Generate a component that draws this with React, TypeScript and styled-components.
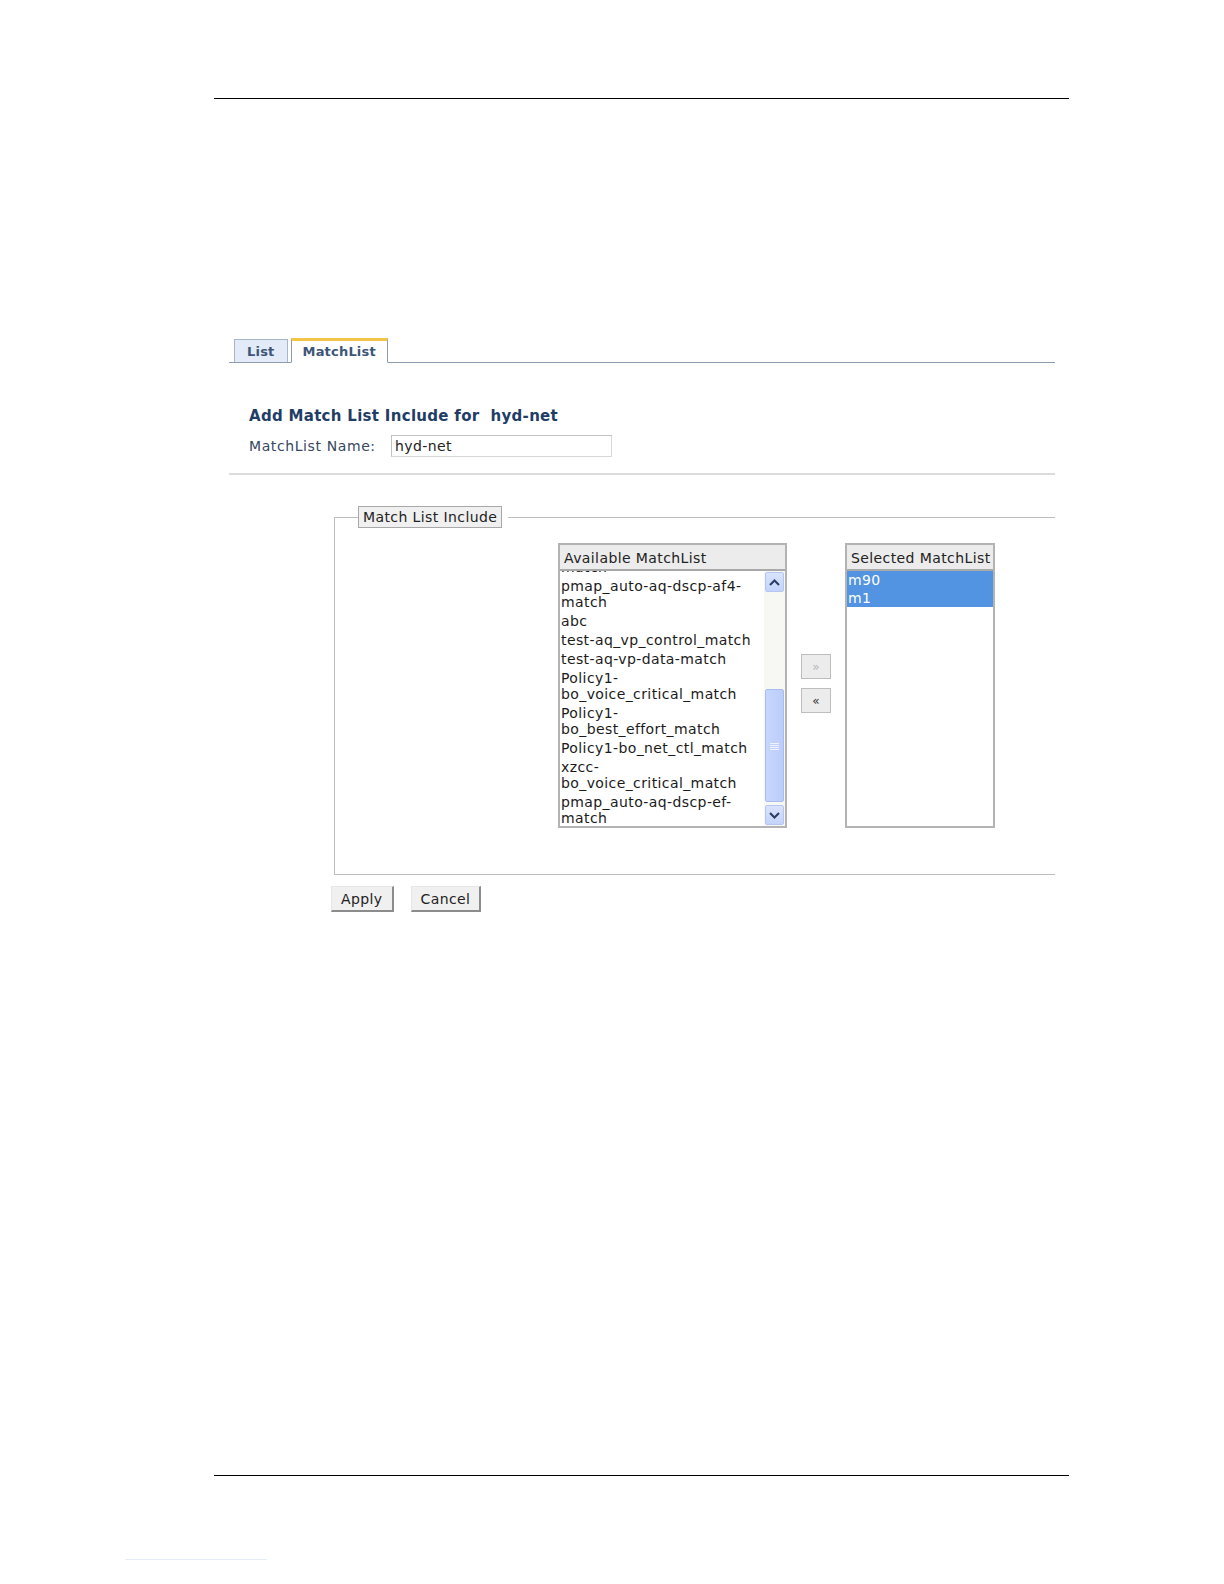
import React from "react";
import styled, { createGlobalStyle } from "styled-components";

const GlobalStyle = createGlobalStyle`
  html, body {
    margin: 0;
    padding: 0;
    background: #ffffff;
    overflow: hidden;
  }
  body {
    font-family: "DejaVu Sans", Verdana, sans-serif;
    font-size: 14px;
    letter-spacing: 0.4px;
    color: #222;
  }
`;

const Page = styled.div`
  width: 1224px;
  height: 1584px;
  padding-top: 98px;
  box-sizing: border-box;
  display: flex;
  flex-direction: column;
  overflow: hidden;
`;

const Rule = styled.div<{ $top: number }>`
  flex: none;
  margin-top: ${(p) => p.$top}px;
  margin-left: 214px;
  width: 855px;
  border-top: 1px solid #000;
`;

const FootLink = styled.div`
  flex: none;
  margin-top: 83px;
  margin-left: 125px;
  width: 142px;
  border-top: 1px solid #e6ecf8;
`;

const Content = styled.div`
  flex: none;
  margin-top: 239px;
  margin-left: 229px;
  width: 826px;
`;

const TabBar = styled.div`
  display: flex;
  align-items: flex-end;
  gap: 3px;
  height: 24px;
  padding-left: 5px;
  border-bottom: 1px solid #8e9cb2;
`;

const Tab = styled.div<{ $active?: boolean }>`
  box-sizing: border-box;
  height: ${(p) => (p.$active ? 25 : 23)}px;
  margin-bottom: ${(p) => (p.$active ? -1 : 0)}px;
  padding: ${(p) => (p.$active ? "3px 11px 0 11px" : "4px 12px 0 12px")};
  font-size: 13px;
  letter-spacing: 0.2px;
  font-weight: bold;
  color: #3d5677;
  background: ${(p) => (p.$active ? "#ffffff" : "#e3ebf8")};
  border: 1px solid ${(p) => (p.$active ? "#8e9cb2" : "#a9b6ca")};
  border-top: ${(p) => (p.$active ? "3px solid #f3c54a" : "1px solid #a9b6ca")};
  border-bottom: ${(p) => (p.$active ? "1px solid #ffffff" : "none")};
  line-height: 16px;
`;

const Heading = styled.h2`
  margin: 44px 0 0 20px;
  font-size: 15px;
  letter-spacing: 0.3px;
  line-height: 18px;
  font-weight: bold;
  color: #1f3d66;
  white-space: pre;
`;

const FieldRow = styled.div`
  display: flex;
  align-items: center;
  margin: 10px 0 0 20px;
  height: 22px;
`;

const Label = styled.label`
  width: 142px;
  color: #34485f;
  letter-spacing: 0.6px;
`;

const TextInput = styled.input`
  box-sizing: border-box;
  width: 221px;
  height: 22px;
  padding: 0 3px;
  border: 1px solid #d8d8d8;
  border-top-color: #c2c2c2;
  border-left-color: #c2c2c2;
  font-family: "DejaVu Sans", Verdana, sans-serif;
  font-size: 14px;
  letter-spacing: 0.4px;
  color: #222;
  outline: none;
`;

const Separator = styled.div`
  margin-top: 16px;
  border-top: 2px solid #dcdcdc;
`;

const Fieldset = styled.fieldset`
  margin: 31px 0 0 105px;
  padding: 15px 0 46px 0;
  border: 1px solid #bdbdbd;
  border-right: none;
  min-width: 0;
`;

const Legend = styled.legend`
  margin-left: 23px;
  padding: 0 6px 0 0;
`;

const LegendBox = styled.span`
  display: block;
  padding: 2px 4px 2px 4px;
  border: 1px solid #a8a8a8;
  background: #f0f0f0;
  line-height: 16px;
`;

const Shuttle = styled.div`
  display: flex;
  align-items: flex-start;
  margin-left: 223px;
`;

const ListBox = styled.div<{ $width: number }>`
  box-sizing: border-box;
  width: ${(p) => p.$width}px;
  height: 285px;
  border: 2px solid #b3b3b3;
  background: #ffffff;
  display: flex;
  flex-direction: column;
  overflow: hidden;
`;

const ListHeader = styled.div`
  flex: none;
  height: 26px;
  box-sizing: border-box;
  padding: 5px 4px 0 4px;
  background: #ececec;
  border-bottom: 2px solid #a9a9a9;
  line-height: 16px;
  white-space: nowrap;
`;

const ListBody = styled.div`
  flex: 1;
  display: flex;
  overflow: hidden;
`;

const Viewport = styled.div`
  flex: 1;
  overflow: hidden;
`;

const Scroller = styled.div<{ $offset: number }>`
  margin-top: ${(p) => -p.$offset}px;
`;

const Item = styled.div<{ $selected?: boolean }>`
  padding: ${(p) => (p.$selected ? "1px 1px 1px 1px" : "1px 1px 2px 1px")};
  line-height: 16px;
  color: ${(p) => (p.$selected ? "#ffffff" : "#1b1b1b")};
  background: ${(p) => (p.$selected ? "#5294e2" : "transparent")};
`;

const ScrollTrack = styled.div`
  flex: none;
  width: 21px;
  background: #f7f7f3;
  display: flex;
  flex-direction: column;
  padding: 1px;
  box-sizing: border-box;
`;

const ScrollButton = styled.div`
  height: 20px;
  box-sizing: border-box;
  border: 1px solid #b6c6f0;
  border-radius: 2px;
  background: linear-gradient(#d9e3fd, #c3d3fb);
  display: flex;
  align-items: center;
  justify-content: center;
`;

const Thumb = styled.div`
  margin-top: 97px;
  height: 113px;
  box-sizing: border-box;
  border: 1px solid #a8bcf0;
  border-radius: 2px;
  background: linear-gradient(90deg, #c7d6fd, #bccdfb);
  display: flex;
  align-items: center;
  justify-content: center;
`;

const Spacer = styled.div`
  flex: 1;
`;

const Movers = styled.div`
  flex: none;
  display: flex;
  flex-direction: column;
  gap: 9px;
  margin: 111px 14px 0 14px;
`;

const MoveButton = styled.button<{ $disabled?: boolean }>`
  box-sizing: border-box;
  width: 30px;
  height: 25px;
  padding: 0;
  border: 1px solid #bdbdbd;
  background: #ececec;
  color: ${(p) => (p.$disabled ? "#b8b8b8" : "#333")};
  font-family: "DejaVu Sans", Verdana, sans-serif;
  font-size: 12px;
  line-height: 1;
`;

const Actions = styled.div`
  display: flex;
  gap: 17px;
  margin: 11px 0 0 102px;
`;

const ActionButton = styled.button`
  box-sizing: border-box;
  height: 26px;
  padding: 0 9px;
  background: #f0f0f0;
  border: 1px solid #e6e6e6;
  border-right: 2px solid #8c8c8c;
  border-bottom: 2px solid #8c8c8c;
  font-family: "DejaVu Sans", Verdana, sans-serif;
  font-size: 14px;
  letter-spacing: 0.4px;
  color: #222;
`;

const available = [
  "pmap_auto-aq-dscp-af2-match",
  "pmap_auto-aq-dscp-af4-match",
  "abc",
  "test-aq_vp_control_match",
  "test-aq-vp-data-match",
  "Policy1-bo_voice_critical_match",
  "Policy1-bo_best_effort_match",
  "Policy1-bo_net_ctl_match",
  "xzcc-bo_voice_critical_match",
  "pmap_auto-aq-dscp-ef-match",
];

const selected = ["m90", "m1"];

const Arrow = ({ up }: { up?: boolean }) => (
  <svg width="11" height="7" viewBox="0 0 11 7">
    <path
      d={up ? "M1 6 L5.5 1.5 L10 6" : "M1 1 L5.5 5.5 L10 1"}
      fill="none"
      stroke="#2a3b66"
      strokeWidth="2"
    />
  </svg>
);

const Grip = () => (
  <svg width="9" height="8" viewBox="0 0 9 8">
    <path d="M0 1.5H9M0 3.5H9M0 5.5H9M0 7.5H9" stroke="#eef3ff" strokeWidth="1" />
  </svg>
);

const App = () => {
  return (
    <Page>
      <GlobalStyle />
      <Rule $top={0} />

      <Content>
        <TabBar>
          <Tab>List</Tab>
          <Tab $active>MatchList</Tab>
        </TabBar>

        <Heading>{"Add Match List Include for  hyd-net"}</Heading>

        <FieldRow>
          <Label>MatchList Name:</Label>
          <TextInput defaultValue="hyd-net" />
        </FieldRow>

        <Separator />

        <Fieldset>
          <Legend>
            <LegendBox>Match List Include</LegendBox>
          </Legend>

          <Shuttle>
            <ListBox $width={229}>
              <ListHeader>Available MatchList</ListHeader>
              <ListBody>
                <Viewport>
                  <Scroller $offset={29}>
                    {available.map((name) => (
                      <Item key={name}>{name}</Item>
                    ))}
                  </Scroller>
                </Viewport>
                <ScrollTrack>
                  <ScrollButton>
                    <Arrow up />
                  </ScrollButton>
                  <Thumb>
                    <Grip />
                  </Thumb>
                  <Spacer />
                  <ScrollButton>
                    <Arrow />
                  </ScrollButton>
                </ScrollTrack>
              </ListBody>
            </ListBox>

            <Movers>
              <MoveButton $disabled>»</MoveButton>
              <MoveButton>«</MoveButton>
            </Movers>

            <ListBox $width={150}>
              <ListHeader>Selected MatchList</ListHeader>
              <ListBody>
                <Viewport>
                  {selected.map((name) => (
                    <Item key={name} $selected>
                      {name}
                    </Item>
                  ))}
                </Viewport>
              </ListBody>
            </ListBox>
          </Shuttle>
        </Fieldset>

        <Actions>
          <ActionButton>Apply</ActionButton>
          <ActionButton>Cancel</ActionButton>
        </Actions>
      </Content>

      <Rule $top={563} />
      <FootLink />
    </Page>
  );
};

export default App;
